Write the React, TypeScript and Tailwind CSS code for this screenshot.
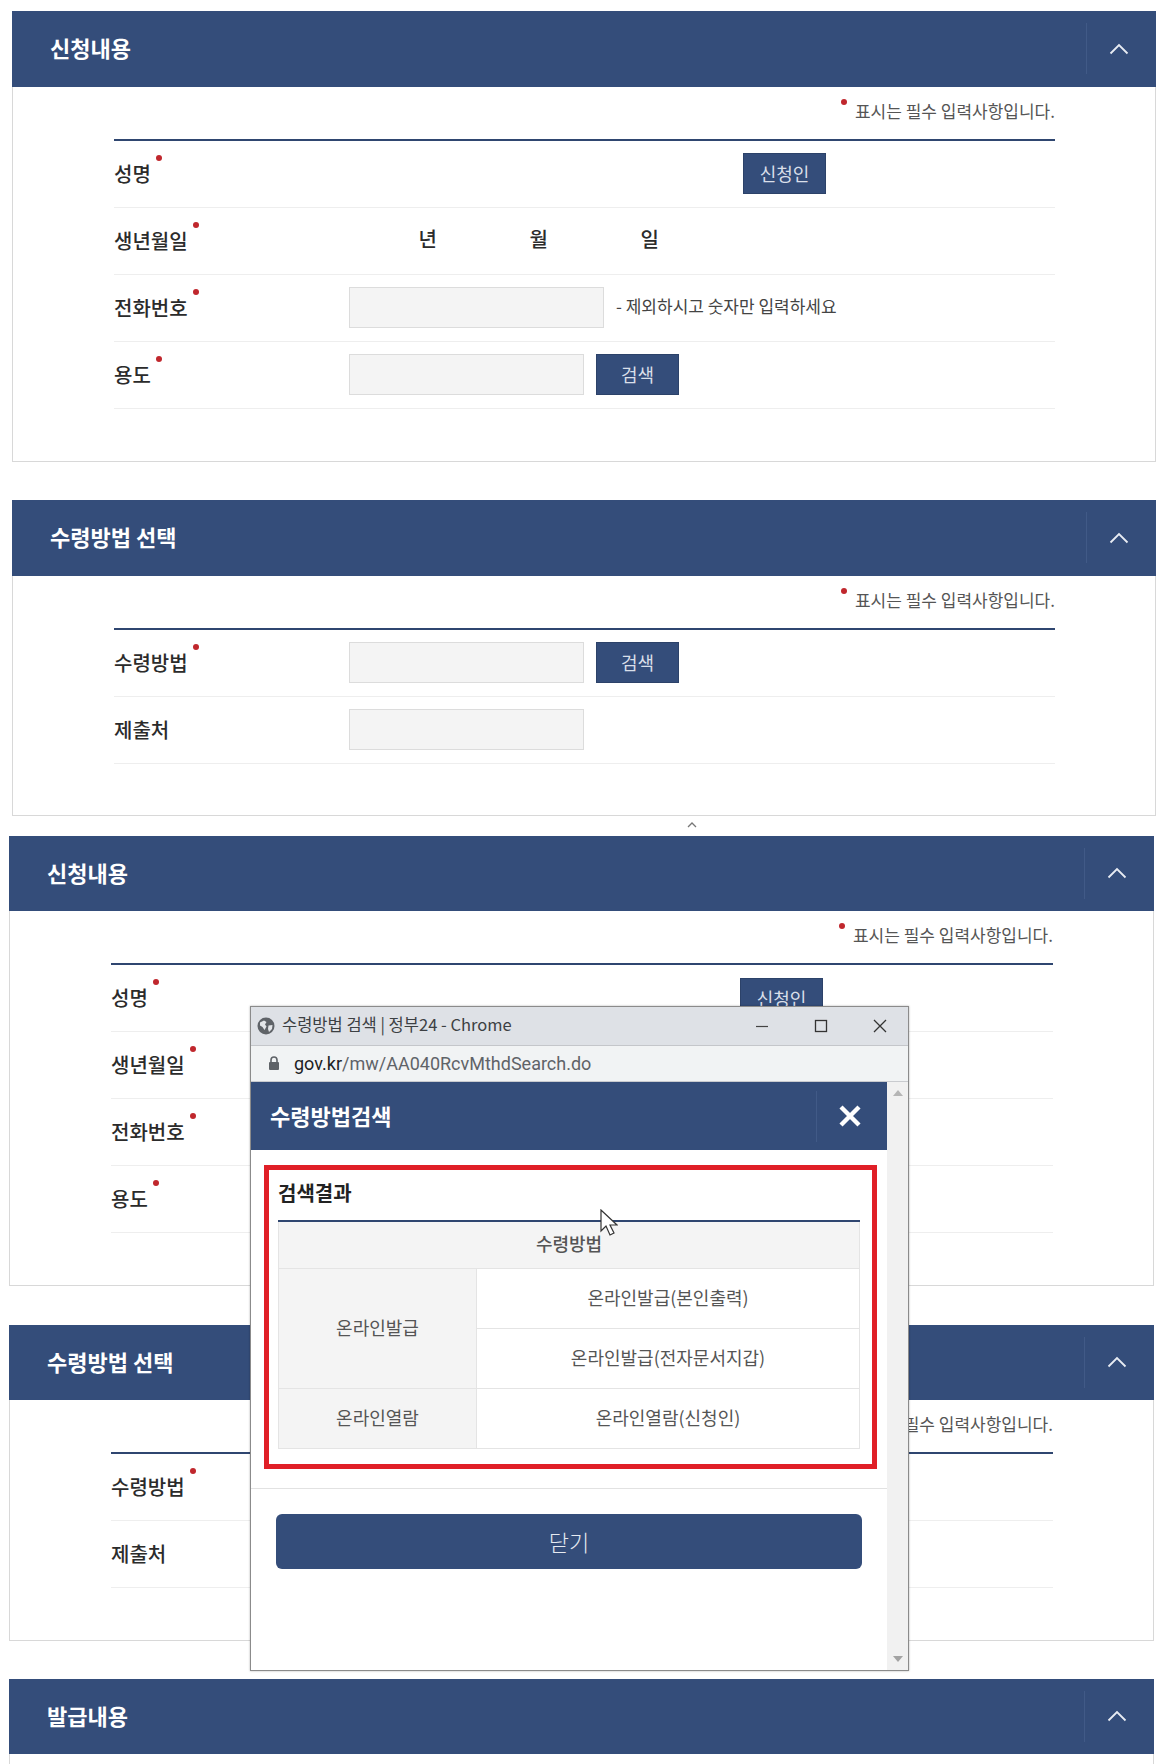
import React from "react";

const korean = "font-['Noto_Sans_CJK_KR','Noto_Sans',sans-serif]";

function Dot({ className }: { className: string }) {
  return (
    <span
      className={`absolute w-[6px] h-[6px] rounded-full bg-[#c0272d] ${className}`}
    ></span>
  );
}

function Chevron() {
  return (
    <svg width="20" height="12" viewBox="0 0 20 12" fill="none">
      <path d="M1.5 10.5 10 2l8.5 8.5" stroke="#e8ecf3" strokeWidth="1.8" />
    </svg>
  );
}

function Field({ className = "w-[235px]" }: { className?: string }) {
  return (
    <div className={`h-[41px] bg-[#f4f4f4] border border-[#dcdcdc] ${className}`}></div>
  );
}

function NavyButton({ label, className = "" }: { label: string; className?: string }) {
  return (
    <button
      className={`w-[83px] h-[41px] bg-[#344d7a] border border-[#2c4269] text-[#d9dfe9] text-[18px] ${className}`}
    >
      {label}
    </button>
  );
}

function Row({
  label,
  required = true,
  children,
}: {
  label: string;
  required?: boolean;
  children?: React.ReactNode;
}) {
  return (
    <div className="flex items-center h-[67px] border-b border-[#eeeeee]">
      <div className="w-[235px] shrink-0">
        <span className="relative text-[20px] font-medium text-[#2b2b2b]">
          {label}
          {required && <Dot className="right-[-11px] top-[-4px]" />}
        </span>
      </div>
      {children}
    </div>
  );
}

function Section({
  title,
  children,
  className = "",
}: {
  title: string;
  children?: React.ReactNode;
  className?: string;
}) {
  return (
    <section className={className}>
      <header className="flex items-center justify-between h-[75.5px] bg-[#344d7a]">
        <h2 className="pl-[38px] mt-[-2px] text-[22px] font-bold text-white">{title}</h2>
        <div className="flex items-center justify-center w-[70px] h-[51px] pr-[6px] border-l border-[#415a87]">
          <Chevron />
        </div>
      </header>
      <div className="border border-t-0 border-[#d8d8d8] bg-white">{children}</div>
    </section>
  );
}

function FormBody({ children, pb = "pb-[52px]" }: { children: React.ReactNode; pb?: string }) {
  return (
    <div className={`pl-[101px] pr-[100px] ${pb}`}>
      <div className="flex justify-end h-[52px] pt-[12px]">
        <span className="relative text-[17px] leading-6 text-[#555555]">
          <Dot className="left-[-14px] top-[0px]" />
          표시는 필수 입력사항입니다.
        </span>
      </div>
      <div className="border-t-2 border-[#2f4670]">{children}</div>
    </div>
  );
}

function Sheet({
  className,
  covered = false,
  lastPb,
}: {
  className: string;
  covered?: boolean;
  lastPb: string;
}) {
  return (
    <div className={className}>
      <Section title="신청내용">
        <FormBody>
          <Row label="성명">
            <NavyButton label="신청인" className="ml-[394px]" />
          </Row>
          <Row label="생년월일">
            {!covered && (
              <div className="flex text-[20px] font-medium text-[#2b2b2b] mt-[-4px]">
                <span className="w-[88px] text-right">년</span>
                <span className="w-[111px] text-right">월</span>
                <span className="w-[111px] text-right">일</span>
              </div>
            )}
          </Row>
          <Row label="전화번호">
            {!covered && (
              <>
                <Field className="w-[255px]" />
                <span className="ml-3 text-[17px] text-[#444444] mt-[-4px]">
                  - 제외하시고 숫자만 입력하세요
                </span>
              </>
            )}
          </Row>
          <Row label="용도">
            {!covered && (
              <>
                <Field />
                <NavyButton label="검색" className="ml-3" />
              </>
            )}
          </Row>
        </FormBody>
      </Section>
      <Section title="수령방법 선택" className="mt-[38.5px]">
        <FormBody pb={lastPb}>
          <Row label="수령방법">
            {!covered && (
              <>
                <Field />
                <NavyButton label="검색" className="ml-3" />
              </>
            )}
          </Row>
          <Row label="제출처" required={false}>
            {!covered && <Field />}
          </Row>
        </FormBody>
      </Section>
    </div>
  );
}

function GlobeIcon() {
  return (
    <svg width="18" height="18" viewBox="0 0 18 18">
      <circle cx="9" cy="9" r="8.5" fill="#5f6368" />
      <path
        d="M3 5.5 7 3.5 9.5 5 8 7.5 9.5 9.5 7.5 13 5.5 10 3 8.5ZM11.5 8.5 15.5 8 15 12 12 15 11 12Z"
        fill="#e3e5e8"
      />
    </svg>
  );
}

function LockIcon() {
  return (
    <svg width="12" height="15" viewBox="0 0 12 15">
      <path d="M3 6V4a3 3 0 0 1 6 0v2" fill="none" stroke="#5f6368" strokeWidth="1.6" />
      <rect x="1" y="6" width="10" height="8" rx="1" fill="#5f6368" />
    </svg>
  );
}

function WindowControls() {
  return (
    <div className="flex items-center ml-auto text-[#333333]">
      <svg width="14" height="14" viewBox="0 0 14 14">
        <path d="M1 7.5h12" stroke="#444444" strokeWidth="1.2" />
      </svg>
      <svg className="ml-[45px]" width="14" height="14" viewBox="0 0 14 14">
        <rect x="1.5" y="1.5" width="11" height="11" fill="none" stroke="#333333" strokeWidth="1.3" />
      </svg>
      <svg className="ml-[44px] mr-[20px]" width="16" height="16" viewBox="0 0 16 16">
        <path d="M2 2l12 12M14 2 2 14" stroke="#333333" strokeWidth="1.3" />
      </svg>
    </div>
  );
}

function Popup() {
  const cell = "border border-[#e4e4e4] text-center text-[18px] text-[#555555] pb-[2px]";
  return (
    <div className="absolute left-[250px] top-[1006px] w-[659px] h-[665px] flex flex-col bg-white border border-[#8b8b8b] shadow-[0_0_2px_rgba(0,0,0,0.3)]">
      <div className="flex items-center shrink-0 h-[39px] pl-[6px] bg-[#dee1e6] border-b border-[#c4c6ca]">
        <GlobeIcon />
        <span className="ml-[7px] text-[16.5px] mt-[-3px] text-[#3c4043]">
          수령방법 검색 | 정부24 - Chrome
        </span>
        <WindowControls />
      </div>
      <div className="flex items-center shrink-0 h-[36px] pl-[17px] bg-[#f1f3f4] border-b border-[#c9cbcf]">
        <LockIcon />
        <span className="ml-[14px] text-[18px] text-[#5f6368] font-['Roboto',sans-serif]">
          <span className="text-[#202124]">gov.kr</span>/mw/AA040RcvMthdSearch.do
        </span>
      </div>
      <div className="flex flex-1 min-h-0">
        <div className="w-[636px] shrink-0">
          <div className="border-b border-[#e2e2e2] pb-[19px]">
            <div className="flex items-center justify-between h-[68px] bg-[#344d7a]">
              <h2 className="pl-[19px] mt-[-2px] text-[22px] font-bold text-white">수령방법검색</h2>
              <div className="flex items-center justify-center w-[71px] h-[51px] pr-[5px] border-l border-[#415a87]">
                <svg width="24" height="24" viewBox="0 0 24 24">
                  <path d="M3 3l18 18M21 3 3 21" stroke="#ffffff" strokeWidth="4.4" />
                </svg>
              </div>
            </div>
            <div className="mt-[15px] ml-[13px] w-[613px] h-[304px] border-[5px] border-[#e01f27] pl-[9px] pr-[12px]">
              <h3 className="h-[50px] pt-[8px] text-[20px] font-bold text-[#222222]">검색결과</h3>
              <table className="w-full border-collapse border-t-2 border-t-[#2f4670]">
                <tbody>
                  <tr className="h-[47px] bg-[#f4f4f4]">
                    <th colSpan={2} className={`${cell} font-medium`}>
                      수령방법
                    </th>
                  </tr>
                  <tr className="h-[60px]">
                    <td rowSpan={2} className={`${cell} w-[198px] bg-[#f4f4f4]`}>
                      온라인발급
                    </td>
                    <td className={cell}>온라인발급(본인출력)</td>
                  </tr>
                  <tr className="h-[60px]">
                    <td className={cell}>온라인발급(전자문서지갑)</td>
                  </tr>
                  <tr className="h-[60px]">
                    <td className={`${cell} bg-[#f4f4f4]`}>온라인열람</td>
                    <td className={cell}>온라인열람(신청인)</td>
                  </tr>
                </tbody>
              </table>
            </div>
          </div>
          <button className="block mt-[25px] ml-[25px] w-[586px] h-[55px] rounded-[6px] bg-[#344d7a] text-[22px] font-light text-[#e6eaf1]">
            닫기
          </button>
        </div>
        <div className="flex flex-col items-center justify-between flex-1 py-[8px] bg-[#f1f1f1]">
          <svg width="10" height="6" viewBox="0 0 10 6">
            <path d="M5 0l5 6H0z" fill="#b5b5b5" />
          </svg>
          <svg width="10" height="6" viewBox="0 0 10 6">
            <path d="M0 0h10L5 6z" fill="#a3a3a3" />
          </svg>
        </div>
      </div>
      <svg className="absolute left-[349px] top-[202px]" width="18" height="27" viewBox="0 0 18 27">
        <path
          d="M1 1v21l5-5 4 9 4-2-4-8h7z"
          fill="#ffffff"
          stroke="#333333"
          strokeWidth="1.2"
        />
      </svg>
    </div>
  );
}

export default function App() {
  return (
    <div className={`relative h-[1764px] overflow-hidden bg-white ${korean}`}>
      <Sheet className="pt-[11px] pl-3 pr-2" lastPb="pb-[51px]" />
      <div className="flex h-[20px] pl-[686px] pt-[6px]">
        <svg width="12" height="6" viewBox="0 0 12 6">
          <path d="M2 5l4-4 4 4" fill="none" stroke="#777777" strokeWidth="1.3" />
        </svg>
      </div>
      <div className="pl-[9px] pr-[10px]">
        <Sheet className="" covered lastPb="pb-[51.5px]" />
        <Section title="발급내용" className="mt-[38px]">
          <div className="h-[20px]"></div>
        </Section>
      </div>
      <Popup />
    </div>
  );
}
